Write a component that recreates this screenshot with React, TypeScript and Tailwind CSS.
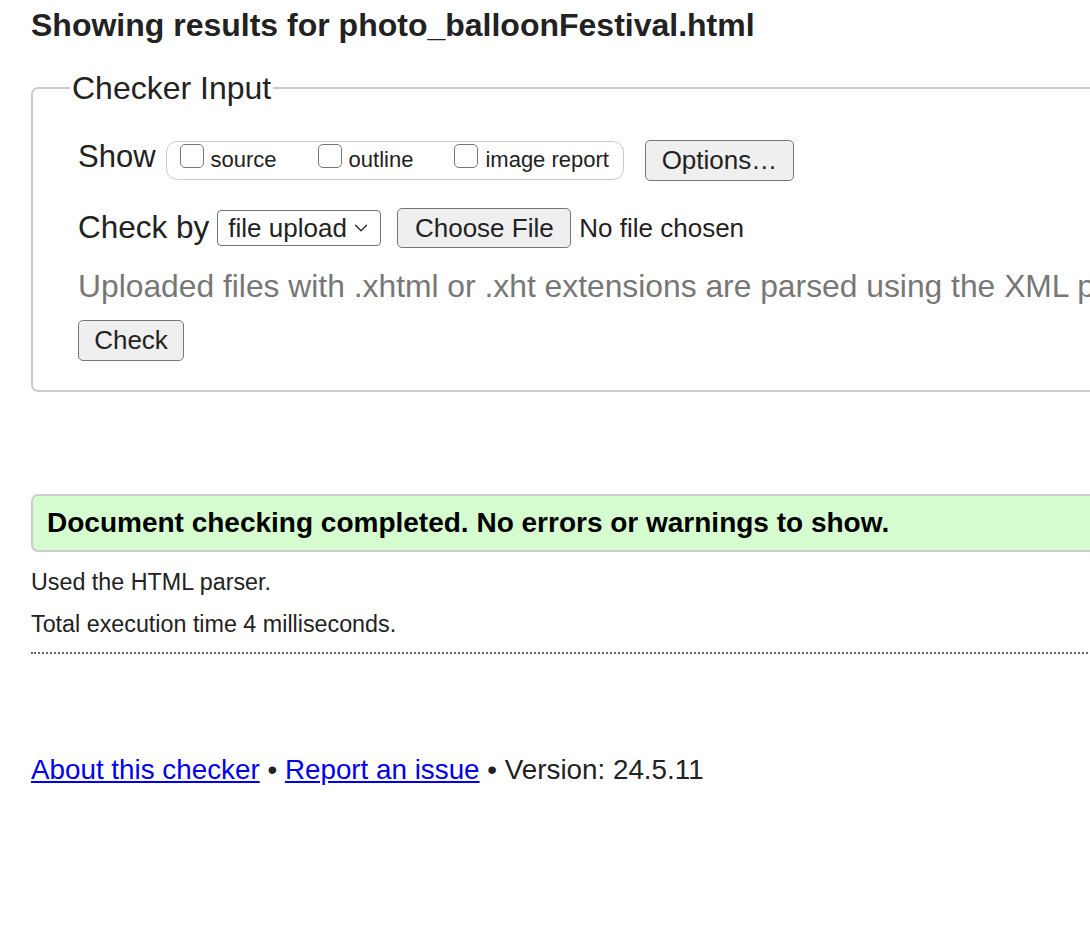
import { ChevronDown } from "lucide-react";

const SHOW_OPTIONS = ["source", "outline", "image report"];

function Checkbox({ label }: { label: string }) {
  return (
    <label className="flex items-center">
      <span className="mb-[8px] h-[24px] w-[24px] rounded-[5px] border-[1.5px] border-[#767676] bg-white" />
      <span className="ml-[7px] text-[22px] leading-[26px]">{label}</span>
    </label>
  );
}

export default function App() {
  return (
    <div className="h-[932px] w-full overflow-hidden bg-white font-['Liberation_Sans',Arial,sans-serif] text-[#222]">
      <div className="w-[1400px] pl-[31px]">
        <h1 className="mt-[7px] text-[32px] font-bold leading-[37px]">
          Showing results for photo_balloonFestival.html
        </h1>

        {/* Checker input */}
        <fieldset className="mt-[26px] w-[1340px] rounded-[7px] border-2 border-[#ccc] pb-[29px] pl-[45px]">
          <legend className="-ml-[8px] px-[2px] text-[32px] leading-[36px]">
            Checker Input
          </legend>

          <div className="mt-[33px] flex h-[42px] items-center">
            <span className="mb-[7px] text-[31px] leading-[36px]">Show</span>
            <div className="ml-[10px] flex h-[39px] items-center gap-[41px] rounded-[11px] border-[1.5px] border-[#ccc] pl-[13px] pr-[14px]">
              {SHOW_OPTIONS.map((o) => (
                <Checkbox key={o} label={o} />
              ))}
            </div>
            <button className="ml-[21px] flex h-[41px] w-[149px] items-center justify-center rounded-[5px] border-[1.5px] border-[#767676] bg-[#efefef] text-[26px]">
              Options…
            </button>
          </div>

          <div className="mt-[27px] flex h-[40px] items-center">
            <span className="mb-[3px] text-[31.5px] leading-[36px]">Check by</span>
            <div className="ml-[8px] flex h-[36px] w-[164px] items-center justify-between rounded-[4px] border border-[#767676] pl-[10px] pr-[8px] text-[26px]">
              <span>file upload</span>
              <ChevronDown className="h-[22px] w-[22px]" strokeWidth={1.3} />
            </div>
            <button className="ml-[16px] flex h-[40px] w-[174px] items-center justify-center rounded-[5px] border-[1.5px] border-[#767676] bg-[#efefef] text-[26px]">
              Choose File
            </button>
            <span className="ml-[8px] text-[26px]">No file chosen</span>
          </div>

          <p className="mt-[20px] whitespace-nowrap text-[31.8px] leading-[36px] text-[#777]">
            Uploaded files with .xhtml or .xht extensions are parsed using the XML parser.
          </p>

          <button className="mt-[16px] flex h-[41px] w-[106px] items-center justify-center rounded-[5px] border-[1.5px] border-[#767676] bg-[#efefef] text-[26px]">
            Check
          </button>
        </fieldset>

        {/* Result */}
        <div className="mt-[102px] flex h-[58px] w-[1340px] items-center rounded-[7px] border-2 border-[#ccc] bg-[#d6fdd0] pl-[14px]">
          <p className="text-[28px] font-bold text-black">
            Document checking completed. No errors or warnings to show.
          </p>
        </div>

        <div className="mt-[9px] text-[23.3px]">
          <p className="flex h-[42px] items-center">Used the HTML parser.</p>
          <p className="flex h-[42px] items-center">Total execution time 4 milliseconds.</p>
        </div>
        <div className="mt-[7px] w-[1340px] border-b-2 border-dotted border-[#666]" />

        <p className="mt-[100px] text-[27.8px] leading-[32px]">
          <a href="#" className="text-[#0000ee] underline">
            About this checker
          </a>{" "}
          •{" "}
          <a href="#" className="text-[#0000ee] underline">
            Report an issue
          </a>{" "}
          • Version: 24.5.11
        </p>
      </div>
    </div>
  );
}
